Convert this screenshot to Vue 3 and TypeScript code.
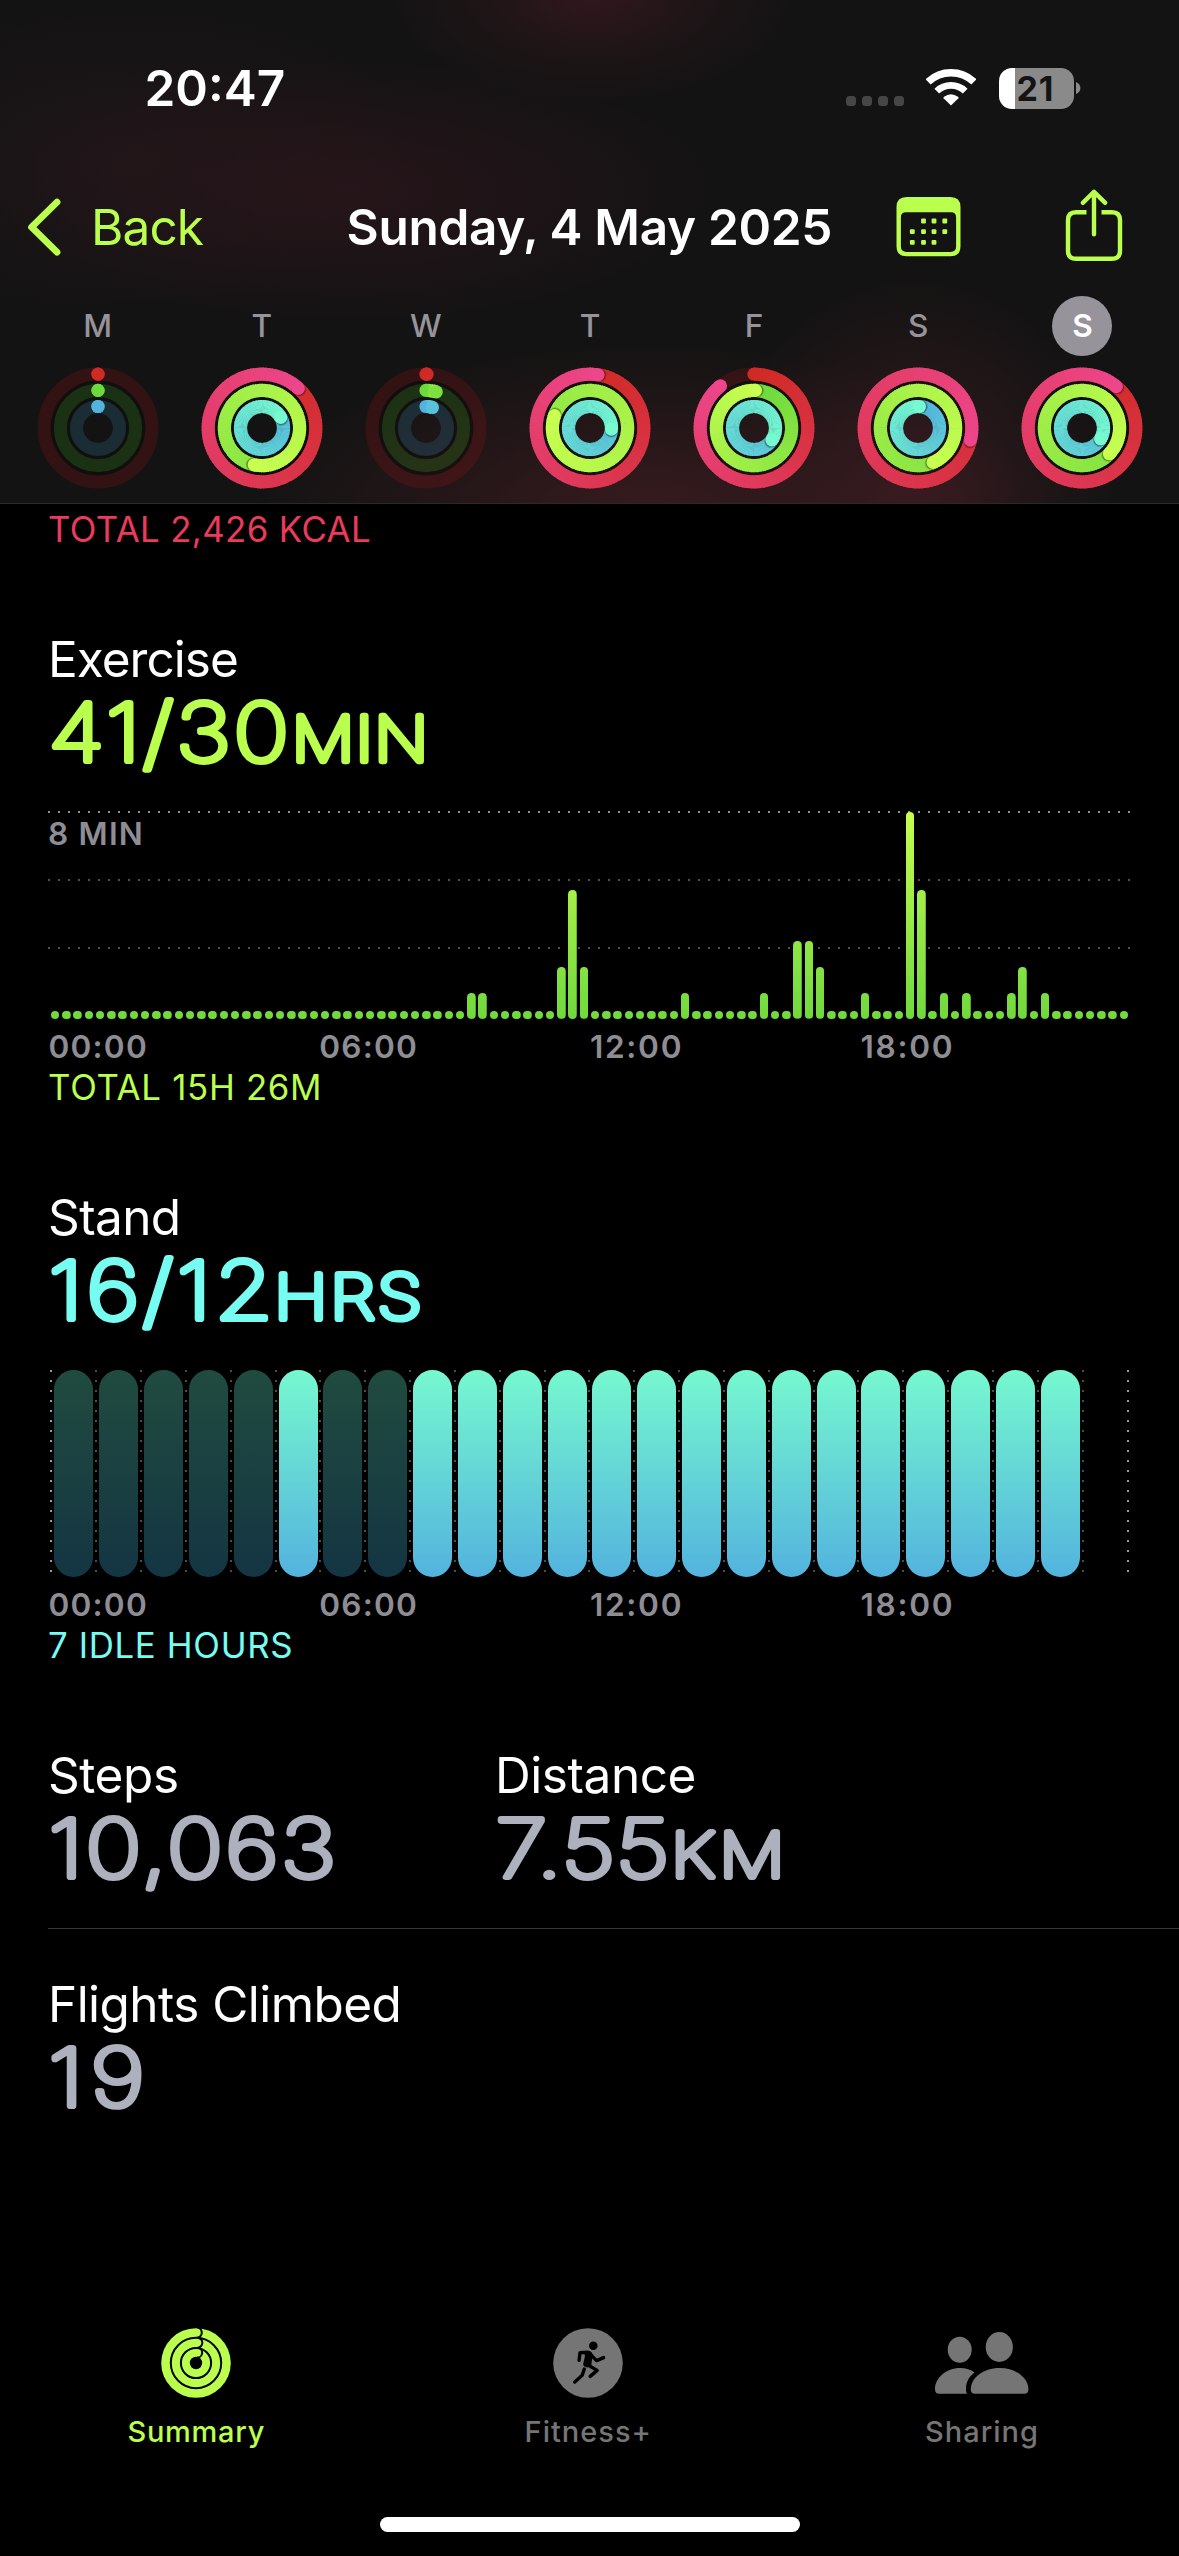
<script setup lang="ts">
type Rgb = [number, number, number]

interface RingSpec {
  radius: number
  start: Rgb
  end: Rgb
  track: string
}

interface Segment {
  d: string
  color: string
}

interface RingArt {
  radius: number
  track: string
  segments: Segment[]
  startCap: { x: number; y: number; color: string } | null
  endCap: { x: number; y: number; color: string }
  shadows: { x: number; y: number }[]
}

interface Day {
  letter: string
  selected?: boolean
  progress: [number, number, number]
}

const ringSpecs: RingSpec[] = [
  { radius: 53.8, start: [208, 42, 37], end: [237, 70, 138], track: 'rgba(200, 15, 25, 0.17)' },
  { radius: 37.6, start: [108, 217, 61], end: [200, 255, 80], track: 'rgba(60, 190, 20, 0.18)' },
  { radius: 21.5, start: [82, 180, 222], end: [118, 250, 208], track: 'rgba(50, 150, 190, 0.2)' },
]

const days: Day[] = [
  { letter: 'M', progress: [0, 0, 0] },
  { letter: 'T', progress: [1.118, 1.533, 1.168] },
  { letter: 'W', progress: [0.003, 0.044, 0.048] },
  { letter: 'T', progress: [1.024, 1.803, 1.258] },
  { letter: 'F', progress: [0.893, 1.006, 1.343] },
  { letter: 'S', progress: [1.286, 1.434, 1.01] },
  { letter: 'S', selected: true, progress: [1.11, 1.37, 1.333] },
]

const point = (r: number, turn: number) => {
  const a = turn * Math.PI * 2
  return { x: +(61 + r * Math.sin(a)).toFixed(2), y: +(61 - r * Math.cos(a)).toFixed(2) }
}

const mix = (a: Rgb, b: Rgb, t: number) =>
  `rgb(${a.map((v, i) => Math.round(v + (b[i] - v) * t)).join(',')})`

function buildRing(spec: RingSpec, progress: number): RingArt {
  const segments: Segment[] = []
  const from = Math.max(0, progress - 1)
  const span = progress - from
  const count = Math.ceil(span * 120)
  for (let i = 0; i < count; i++) {
    const t0 = from + (span * i) / count
    const t1 = Math.min(progress, from + (span * (i + 1.4)) / count)
    const a = point(spec.radius, t0)
    const b = point(spec.radius, t1)
    segments.push({
      d: `M${a.x} ${a.y}A${spec.radius} ${spec.radius} 0 0 1 ${b.x} ${b.y}`,
      color: mix(spec.start, spec.end, t0 / progress),
    })
  }
  const tip = point(spec.radius, progress)
  const perPixel = 1 / (spec.radius * Math.PI * 2)
  return {
    radius: spec.radius,
    track: spec.track,
    segments,
    startCap: progress < 1 ? { ...point(spec.radius, 0), color: mix(spec.start, spec.end, 0) } : null,
    endCap: { ...tip, color: mix(spec.start, spec.end, progress > 0.2 ? 1 : progress * 4) },
    shadows: progress > 1 ? [0.7, 1.4, 2.1].map((px) => point(spec.radius, progress + px * perPixel)) : [],
  }
}

const week = days.map((day) => ({
  ...day,
  rings: ringSpecs.map((spec, i) => buildRing(spec, day.progress[i])),
}))

// Minutes of exercise in each quarter hour
const exerciseBySlot: Record<number, number> = {
  37: 1, 38: 1, 45: 2, 46: 5, 47: 2, 56: 1, 63: 1, 66: 3, 67: 3, 68: 2,
  72: 1, 76: 8, 77: 5, 79: 1, 81: 1, 85: 1, 86: 2, 88: 1,
}
const exerciseBars = Array.from({ length: 96 }, (_, i) => (exerciseBySlot[i] ? exerciseBySlot[i] * 25.9 : 8.5))

const idleHours = [0, 1, 2, 3, 4, 6, 7]
const standHours = Array.from({ length: 25 }, (_, i) => (i > 22 ? 'none' : idleHours.includes(i) ? 'idle' : 'stood'))

const hourLabels = ['00:00', '06:00', '12:00', '18:00']
const calendarDots = [
  [27.5, 24], [38, 24], [48.8, 24],
  [16.3, 34.7], [27.5, 34.7], [38, 34.7], [48.8, 34.7],
  [16.3, 45.3], [27.5, 45.3], [38, 45.3],
]
</script>

<template>
  <div class="screen">
    <header class="header">
      <div class="status">
        <span class="time">20:47</span>
        <div class="indicators">
          <div class="cell-dots"><i v-for="n in 4" :key="n"></i></div>
          <svg class="wifi" width="50" height="38" viewBox="0 0 50 38">
            <g fill="none" stroke="#fff">
              <path d="M2.1 12.9A33.3 33.3 0 0 1 47.9 12.9" stroke-width="7.4" />
              <path d="M10.8 22.1A20.6 20.6 0 0 1 39.2 22.1" stroke-width="6.8" />
            </g>
            <path d="M25 36.6 L17.6 29.2 Q17.2 28.4 18 27.8 Q25 22.8 32 27.8 Q32.8 28.4 32.4 29.2Z" fill="#fff" />
          </svg>
          <div class="battery">
            <div class="battery-body"><span>21</span></div>
            <svg width="5" height="12" viewBox="0 0 5 12"><path d="M0 0Q4.4 2 4.4 6T0 12Z" fill="#8a8a8a" /></svg>
          </div>
        </div>
      </div>

      <nav class="nav">
        <svg class="chevron" width="40" height="60" viewBox="0 0 40 60">
          <path d="M33 5.2L7.6 30.2L33 55.2" fill="none" stroke="#bafe4e" stroke-width="6.8" stroke-linecap="round" stroke-linejoin="round" />
        </svg>
        <span class="back">Back</span>
        <span class="title">Sunday, 4 May 2025</span>
        <svg width="66" height="60" viewBox="0 0 66 60">
          <path fill="#bafe4e" fill-rule="evenodd" d="M10.5 0H54.5Q64.5 0 64.5 10V49.5Q64.5 59.3 54.5 59.3H10.5Q.5 59.3 .5 49.5V10Q.5 0 10.5 0ZM10 15.2Q4.9 15.2 4.9 20.2V49.5Q4.9 54.9 10.5 54.9H54.5Q60.1 54.9 60.1 49.5V20.2Q60.1 15.2 55 15.2Z" />
          <rect v-for="(p, i) in calendarDots" :key="i" :x="p[0] - 2.4" :y="p[1] - 2.4" width="4.8" height="4.8" rx="1" fill="#bafe4e" />
        </svg>
        <svg width="58" height="78" viewBox="0 0 58 78">
          <g fill="none" stroke="#bafe4e" stroke-width="4.4" stroke-linecap="round" stroke-linejoin="round">
            <path d="M29 4.2V46.3M17.8 14.8L29 3.9L40.2 14.8" />
            <path stroke-linecap="butt" d="M21.5 24.2H11Q3 24.2 3 32.2V62.8Q3 70.8 11 70.8H47Q55 70.8 55 62.8V32.2Q55 24.2 47 24.2H36.5" />
          </g>
        </svg>
      </nav>

      <div class="week">
        <div v-for="(day, i) in week" :key="i" class="day">
          <span class="letter" :class="{ selected: day.selected }">{{ day.letter }}</span>
          <svg width="122" height="122" viewBox="0 0 122 122">
            <circle cx="61" cy="61" r="45.7" fill="none" stroke="rgba(10,8,8,.45)" stroke-width="3.5" />
            <circle cx="61" cy="61" r="29.5" fill="none" stroke="rgba(10,8,8,.45)" stroke-width="3.5" />
            <template v-for="ring in day.rings" :key="ring.radius">
              <circle cx="61" cy="61" :r="ring.radius" fill="none" :stroke="ring.track" stroke-width="13.2" />
              <circle v-if="ring.startCap" :cx="ring.startCap.x" :cy="ring.startCap.y" r="6.6" :fill="ring.startCap.color" />
              <path v-for="(s, n) in ring.segments" :key="n" :d="s.d" :stroke="s.color" stroke-width="13.2" fill="none" />
              <circle v-for="(s, n) in ring.shadows" :key="'s' + n" :cx="s.x" :cy="s.y" r="6.5" fill="rgba(0,0,0,.16)" />
              <circle :cx="ring.endCap.x" :cy="ring.endCap.y" r="6.6" :fill="ring.endCap.color" />
            </template>
          </svg>
        </div>
      </div>
    </header>

    <main class="content">
      <p class="note move">TOTAL 2,426 KCAL</p>

      <section class="metric">
        <h2 class="name-exercise">Exercise</h2>
        <svg class="figure exercise" width="1100" height="100">
          <text transform="translate(.4 72.3) scale(1.17 1)" font-size="80" letter-spacing="2.4">41/30</text>
          <text transform="translate(243.7 72.3) scale(1.13 1)" font-size="62" letter-spacing="1.1">MIN</text>
        </svg>
        <div class="exercise-chart">
          <span class="peak">8 MIN</span>
          <div class="exercise-bars">
            <i v-for="(h, i) in exerciseBars" :key="i" :style="{ height: h + 'px' }"></i>
          </div>
        </div>
        <div class="hours"><span v-for="h in hourLabels" :key="h">{{ h }}</span></div>
        <p class="note exercise-note">TOTAL 15H 26M</p>
      </section>

      <section class="metric">
        <h2 class="name-stand">Stand</h2>
        <svg class="figure stand" width="1100" height="100">
          <text transform="translate(.4 72.3) scale(1.17 1)" font-size="80" letter-spacing="3.1">16/12</text>
          <text transform="translate(226.1 72.3) scale(1.18 1)" font-size="62" letter-spacing="1.9">HRS</text>
        </svg>
        <div class="stand-chart">
          <div v-for="(state, i) in standHours" :key="i" class="slot"><i :class="state"></i></div>
        </div>
        <div class="hours"><span v-for="h in hourLabels" :key="h">{{ h }}</span></div>
        <p class="note stand-note">7 IDLE HOURS</p>
      </section>

      <section class="metric pair">
        <div>
          <h2>Steps</h2>
          <svg class="figure plain" width="440" height="100">
            <text transform="translate(.4 72.3) scale(1.18 1)" font-size="80" letter-spacing="2.1">10,063</text>
          </svg>
        </div>
        <div>
          <h2>Distance</h2>
          <svg class="figure plain" width="440" height="100">
            <text transform="translate(.5 72.3) scale(1.18 1)" font-size="80" letter-spacing=".9">7.55</text>
            <text transform="translate(176.1 72.3) scale(1.18 1)" font-size="62" letter-spacing="3.7">KM</text>
          </svg>
        </div>
      </section>

      <section class="flights">
        <h2 class="name-flights">Flights Climbed</h2>
        <svg class="figure plain" width="440" height="100">
          <text transform="translate(.3 72.3) scale(1.2 1)" font-size="80" letter-spacing="5.8">19</text>
        </svg>
      </section>
    </main>

    <footer class="tabs">
      <div class="tab active">
        <svg width="70" height="70" viewBox="-35 -35 70 70">
          <circle r="34.8" fill="#bafe4e" />
          <g fill="none" stroke="#000" stroke-width="2">
            <circle r="25.2" />
            <circle r="15.1" />
            <path d="M1.5 -35.5A5.2 5.2 0 0 1 1 -25.2M1.5 -25.3A5.1 5.1 0 0 1 1 -15.1M1.5 -15.2A4.9 4.9 0 0 1 1 -5.4" />
          </g>
          <circle r="6.2" fill="#000" />
        </svg>
        <span>Summary</span>
      </div>
      <div class="tab">
        <svg width="70" height="70" viewBox="-35 -35 70 70">
          <circle r="34.8" fill="#757575" />
          <circle cx="5.3" cy="-17.3" r="4.3" />
          <g fill="none" stroke="#000" stroke-width="3.4" stroke-linecap="round" stroke-linejoin="round">
            <path d="M-8.9 -2.6L-8 -10.3L0 -10.8" />
            <path d="M2.5 -8.5L8.6 -2.4L15.6 -5.4" />
            <path d="M0 2L9.2 7.4L2.2 13.4" />
            <path d="M-3.7 6L-5.8 12.3L-13.2 19" />
          </g>
          <path d="M-4.5 -12H1.5Q4 -11.5 4.6 -8L3.3 2.2L-.5 4.6Q-5 3.8 -4.8 1L-3 -7Z" />
        </svg>
        <span>Fitness+</span>
      </div>
      <div class="tab">
        <svg width="94" height="70" viewBox="0 -4 94 70" fill="#757575">
          <ellipse cx="24.7" cy="17.7" rx="12" ry="13" />
          <ellipse cx="64.3" cy="15" rx="13.6" ry="15" />
          <path d="M4.2 61.7Q0 61.7 0 57.2C0 46 11 36 25 36C31 36 36 37.5 39.5 40.5C33 45.5 31 51 31 57C31 59 31.3 60.5 32 61.7Z" />
          <path d="M40 61.7Q35.8 61.7 35.8 57.2C35.8 46 48 36 64.6 36S93.4 46 93.4 57.2Q93.4 61.7 89.2 61.7Z" />
        </svg>
        <span>Sharing</span>
      </div>
    </footer>
    <div class="home-indicator"></div>
  </div>
</template>

<style>
body {
  background: #000;
}
</style>

<style scoped>
.screen {
  box-sizing: border-box;
  width: 1179px;
  height: 2556px;
  display: flex;
  flex-direction: column;
  background: #000;
  color: #fff;
  font-family: Inter, 'Liberation Sans', sans-serif;
  overflow: hidden;
}
svg {
  display: block;
  flex: none;
}
h2,
p {
  margin: 0;
  font-weight: 400;
  white-space: nowrap;
}

.header {
  box-sizing: border-box;
  height: 504px;
  flex: none;
  border-bottom: 1px solid #2b2a2b;
  background:
    radial-gradient(ellipse 200px 110px at 592px -8px, rgba(58, 25, 32, 0.8), rgba(58, 25, 32, 0.25) 55%, rgba(58, 25, 32, 0)),
    radial-gradient(ellipse 360px 130px at 350px 190px, rgba(43, 21, 27, 0.75), rgba(43, 21, 27, 0.35) 55%, rgba(43, 21, 27, 0)),
    radial-gradient(ellipse 300px 150px at 130px 160px, rgba(40, 24, 28, 0.5), rgba(40, 24, 28, 0)),
    radial-gradient(ellipse 200px 230px at 915px 510px, rgba(62, 28, 34, 0.85), rgba(62, 28, 34, 0.35) 55%, rgba(62, 28, 34, 0)),
    radial-gradient(ellipse 390px 170px at 650px 515px, rgba(58, 27, 31, 0.95), rgba(58, 27, 31, 0.4) 55%, rgba(58, 27, 31, 0)),
    #141313;
}
.status {
  height: 176px;
  display: flex;
  align-items: center;
  justify-content: space-between;
  padding: 0 98px 0 144.5px;
}
.time {
  font-size: 49.5px;
  font-weight: 600;
}
.indicators {
  display: flex;
  align-items: center;
}
.cell-dots {
  display: flex;
  gap: 6px;
  margin: 26px 22px 0 0;
}
.cell-dots i {
  width: 10px;
  height: 10px;
  border-radius: 3.5px;
  background: #464646;
}
.wifi {
  margin-right: 23px;
}
.battery {
  display: flex;
  align-items: center;
  gap: 2.5px;
}
.battery-body {
  width: 75px;
  height: 41px;
  border-radius: 13px;
  background: linear-gradient(to right, #fff 16px, #8a8a8a 16px);
  color: #141414;
  font-size: 34px;
  font-weight: 700;
  line-height: 41px;
  letter-spacing: 0.8px;
  box-sizing: border-box;
  padding-left: 18px;
}
.nav {
  height: 102px;
  display: grid;
  grid-template-columns: 91px 255.6px 549px 169.6px 1fr;
  align-items: center;
  font-size: 49.5px;
  line-height: 60px;
}
.chevron {
  margin-left: 24px;
}
.back {
  color: #bafe4e;
  letter-spacing: -0.9px;
}
.title {
  font-weight: 600;
  letter-spacing: -0.33px;
  white-space: nowrap;
}
.week {
  display: flex;
  padding: 18px 14.5px 0 15.5px;
}
.day {
  flex: 1;
  display: flex;
  flex-direction: column;
  align-items: center;
  gap: 11px;
}
.letter {
  width: 60px;
  height: 60px;
  border-radius: 50%;
  text-align: center;
  font-size: 31.6px;
  line-height: 60px;
  font-weight: 500;
  color: #96939a;
}
.letter.selected {
  background: #96939a;
  color: #fff;
  font-weight: 600;
}

.content {
  padding: 5px 0 0 48px;
}
.note {
  height: 40px;
  line-height: 40px;
  font-size: 34.8px;
}
.move {
  color: #ea3b5b;
  letter-spacing: 0.38px;
}
.exercise-note {
  color: #bafe4e;
  letter-spacing: 0.7px;
}
.stand-note {
  color: #76fcf1;
  letter-spacing: 0.65px;
}
.metric {
  margin-top: 80.5px;
}
.move + .metric {
  margin-top: 80px;
}
h2 {
  font-size: 49.5px;
  line-height: 60px;
  height: 60px;
  letter-spacing: -0.43px;
}
.name-exercise {
  letter-spacing: -0.97px;
}
.name-stand {
  letter-spacing: -0.6px;
}
.name-flights {
  letter-spacing: -0.55px;
}
.figure {
  overflow: visible;
  font-weight: 100;
  stroke-width: 6.8;
  stroke-linejoin: round;
}
.figure text {
  vector-effect: non-scaling-stroke;
}
.figure.exercise {
  fill: #bafe4e;
  stroke: #bafe4e;
}
.figure.stand {
  fill: #76fcf1;
  stroke: #76fcf1;
}
.figure.plain {
  fill: #adb1be;
  stroke: #adb1be;
}
.exercise-chart {
  width: 1082px;
  height: 208px;
  margin-top: 22px;
  display: grid;
  background:
    linear-gradient(to right, #929292 2px, transparent 2px) 0 0 / 10px 2px repeat-x,
    linear-gradient(to right, #505050 2px, transparent 2px) 0 68px / 10px 2px repeat-x,
    linear-gradient(to right, #505050 2px, transparent 2px) 0 136px / 10px 2px repeat-x;
}
.peak,
.exercise-bars {
  grid-area: 1 / 1;
}
.peak {
  padding-top: 2.5px;
  font-size: 31.6px;
  line-height: 40px;
  font-weight: 600;
  letter-spacing: 1.2px;
  color: #8e8d93;
}
.exercise-bars {
  display: flex;
  align-items: flex-end;
  gap: 2.75px;
  padding-left: 2.85px;
}
.exercise-bars i {
  flex: none;
  width: 8.5px;
  border-radius: 4.25px;
  background: linear-gradient(to top, #70d93d, #c6fd50) bottom / 100% 207px no-repeat;
}
.hours {
  display: grid;
  grid-template-columns: repeat(4, 270.7px);
  height: 40px;
  margin-top: 7.5px;
  padding-left: 0.5px;
  font-size: 31.6px;
  line-height: 40px;
  font-weight: 600;
  letter-spacing: 1.2px;
  color: #8e8d93;
}
.hours span:nth-child(n + 3) {
  letter-spacing: 1.7px;
}
.stand-chart {
  display: flex;
  height: 207px;
  margin: 23px 0 0 2.3px;
}
.slot {
  flex: none;
  box-sizing: border-box;
  width: 44.85px;
  padding-left: 4px;
  background: linear-gradient(#4c4c4c 2px, transparent 2px) 0 0 / 2px 10px repeat-y;
}
.slot:first-child,
.slot:last-child {
  background-image: linear-gradient(#999 2px, transparent 2px);
}
.slot i {
  display: block;
  width: 39px;
  height: 207px;
  border-radius: 19.5px;
}
.stood {
  background: linear-gradient(#76f8cf, #53b3de);
}
.idle {
  background: linear-gradient(#204b3f, #143543);
}
.pair {
  display: grid;
  grid-template-columns: 447px 1fr;
  padding-bottom: 23px;
  border-bottom: 1px solid #39393b;
}
.flights {
  margin-top: 45px;
}

.tabs {
  display: grid;
  grid-template-columns: 391.5px 392.5px 395px;
  margin-top: auto;
}
.tab {
  display: flex;
  flex-direction: column;
  align-items: center;
  gap: 16px;
  font-size: 29px;
  line-height: 36px;
  font-weight: 500;
  letter-spacing: 1px;
  color: #757575;
}
.tab.active {
  color: #bafe4e;
  letter-spacing: 0.73px;
}
.tab span {
  padding-left: 1px;
}
.home-indicator {
  flex: none;
  width: 420px;
  height: 15px;
  border-radius: 7.5px;
  margin: 67px auto 24px;
  background: #fff;
}
</style>
